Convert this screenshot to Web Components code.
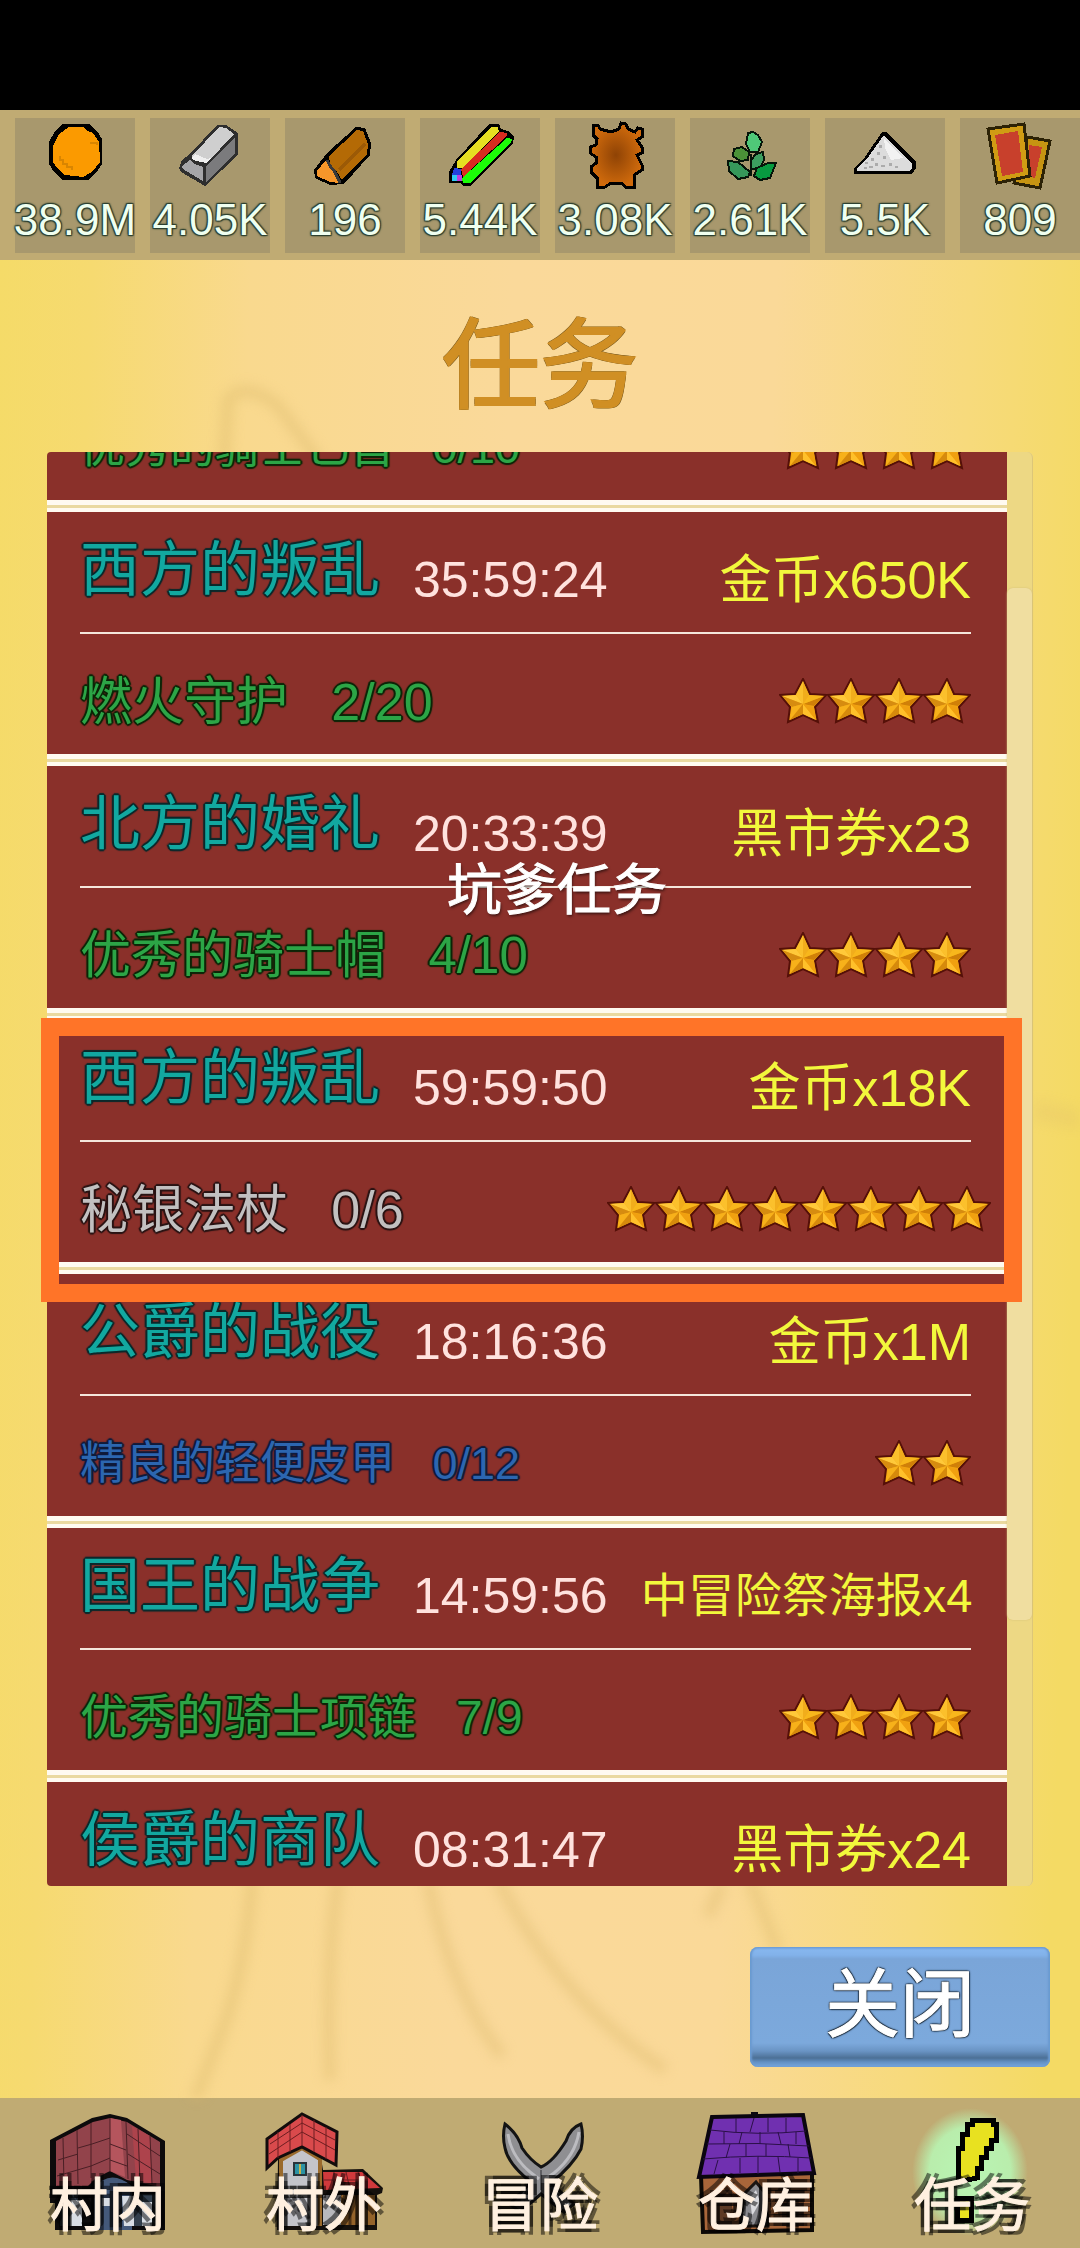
<!DOCTYPE html>
<html lang="zh-CN">
<head>
<meta charset="utf-8">
<meta name="viewport" content="width=device-width, initial-scale=1">
<title>任务</title>
<style>
  body {
    margin: 0;
    background: #000;
    font-family: "Liberation Sans", "Noto Sans CJK SC", sans-serif;
  }
</style>
</head>
<body>
<game-screen>
  <resource-bar slot="top">
    <resource-cell icon="gold">38.9M</resource-cell>
    <resource-cell icon="ingot">4.05K</resource-cell>
    <resource-cell icon="wood">196</resource-cell>
    <resource-cell icon="cloth">5.44K</resource-cell>
    <resource-cell icon="hide">3.08K</resource-cell>
    <resource-cell icon="herb">2.61K</resource-cell>
    <resource-cell icon="powder">5.5K</resource-cell>
    <resource-cell icon="cards">809</resource-cell>
  </resource-bar>

  <span slot="title">任务</span>

  <quest-panel scroll="198">
    <quest-card name="南方的战争" time="11:59:59" reward="金币x500K" item="优秀的骑士匕首" progress="0/10" rarity="green" fit="small" stars="4"></quest-card>
    <quest-card name="西方的叛乱" time="35:59:24" reward="金币x650K" item="燃火守护" progress="2/20" rarity="green" stars="4"></quest-card>
    <quest-card name="北方的婚礼" time="20:33:39" reward="黑市券x23" item="优秀的骑士帽" progress="4/10" rarity="green" fit="large" stars="4"></quest-card>
    <quest-card name="西方的叛乱" time="59:59:50" reward="金币x18K" item="秘银法杖" progress="0/6" rarity="grey" stars="8"></quest-card>
    <quest-card name="公爵的战役" time="18:16:36" reward="金币x1M" item="精良的轻便皮甲" progress="0/12" rarity="blue" fit="small" stars="2"></quest-card>
    <quest-card name="国王的战争" time="14:59:56" reward="中冒险祭海报x4" item="优秀的骑士项链" progress="7/9" rarity="green" fit="medium" stars="4"></quest-card>
    <quest-card name="侯爵的商队" time="08:31:47" reward="黑市券x24" item="" progress="" rarity="green" stars="0"></quest-card>
    <span slot="note">坑爹任务</span>
  </quest-panel>

  <game-button slot="actions">关闭</game-button>

  <nav-bar slot="nav">
    <nav-item icon="village">村内</nav-item>
    <nav-item icon="outside">村外</nav-item>
    <nav-item icon="swords">冒险</nav-item>
    <nav-item icon="store">仓库</nav-item>
    <nav-item icon="quest">任务</nav-item>
  </nav-bar>
</game-screen>

<script>
const resourceIcons = {
  gold: `
    <polygon points="48,6 74,6 82,13 87,21 87,46 81,55 73,62 48,62 39,54 34,46 34,24 40,13" fill="#000"/>
    <polygon points="54,9 69,9 71,12 78,15 84,24 85,44 77,54 68,59 50,57 43,51 38,44 38,28 44,16" fill="#fb9a00"/>
    <path d="M45 38v4h3v4h4v3h5v3M75 25h7v2" fill="none" stroke="#d98500" stroke-width="2"/>`,
  ingot: `
    <polygon points="29,50 32,42 39,37 67,7 76,7 88,15 88,37 55,68 31,54" fill="#2e2e2e"/>
    <polygon points="42,38 69,9 76,10 84,16 57,45 46,43" fill="#cfcfcf"/>
    <polygon points="41,40 45,36 57,41 61,40 57,45 46,43" fill="#efefef"/>
    <polygon points="32,48 40,42 45,46 53,49 53,63 33,51" fill="#a5a5a8"/>
    <polygon points="56,49 85,19 85,36 56,64" fill="#7b7b7d"/>`,
  wood: `
    <polygon points="71,9 80,10 86,25 85,37 59,66 45,67 30,60 29,52 42,35" fill="#000"/>
    <polygon points="72,12 78,13 83,26 82,36 57,62 52,54 45,46 44,38" fill="#b46a05"/>
    <path d="M54 52 80 26" stroke="#9c5a06" stroke-width="3"/>
    <polygon points="40,43 44,47 49,55 54,65 45,64 32,58 32,53" fill="#f6962a"/>
    <path d="M42 42 45 48 50 54 55 65" fill="none" stroke="#3a3a3a" stroke-width="3"/>`,
  cloth: `
    <polygon points="69,6 79,6 81,11 88,13 94,19 93,26 50,68 43,68 41,65 29,65 29,54 36,42" fill="#000"/>
    <polygon points="71,9 78,9 79,14 42,50 37,50 37,44" fill="#e6de22"/>
    <polygon points="80,14 87,15 87,18 43,59 41,51" fill="#d92b20"/>
    <polygon points="87,20 92,21 91,25 50,65 43,65 42,60" fill="#1cfc08"/>
    <polygon points="34,50 41,51 41,57 32,57" fill="#2440dc"/>
    <rect x="32" y="57" width="6" height="6" fill="#30c8f4"/>
    <rect x="37" y="57" width="5" height="6" fill="#c03ce0"/>`,
  hide: `
    <defs><radialGradient id="leather"><stop offset="0" stop-color="#8f4305"/><stop offset="1" stop-color="#cf6a0c"/></radialGradient></defs>
    <polygon points="38,7 43,7 45,11 56,14 64,11 66,5 71,6 73,11 80,14 83,10 87,11 87,19 82,22 87,29 87,35 82,37 87,47 87,52 79,57 79,69 71,69 66,65 56,65 50,69 42,69 42,60 36,54 36,49 41,45 41,39 35,35 35,29 41,27 42,21 38,17" fill="url(#leather)" stroke="#000" stroke-width="3"/>`,
  herb: `
    <g stroke="#06150a" stroke-width="2">
      <polygon points="58,15 63,14 68,17 72,24 68,34 60,34 56,26" fill="#4fc878"/>
      <polygon points="44,31 52,29 59,34 58,42 50,43 43,38" fill="#4b9238"/>
      <polygon points="61,42 66,36 73,34 74,42 70,50 61,51" fill="#3c9f60"/>
      <polygon points="38,43 48,44 60,54 58,59 48,61 39,53" fill="#36985a"/>
      <polygon points="67,50 78,45 86,45 80,60 70,62 64,58" fill="#079b40"/>
    </g>
    <path d="M61 36v22" stroke="#06150a" stroke-width="2"/>`,
  powder: `
    <polygon points="57,14 61,14 72,25 91,44 91,50 87,56 29,56 29,50 40,39" fill="#000"/>
    <polygon points="59,17 66,25 87,45 87,50 84,53 32,53 32,50 44,38" fill="#dcdcdc"/>
    <polygon points="59,20 78,40 66,42 60,30" fill="#f2f2f2"/>
    <g fill="#ababab"><path d="M40 44h3v2h-3zM46 40h3v3h-3zM44 48h4v2h-4zM52 34h3v3h-3zM50 45h3v3h-3zM58 38h3v3h-3zM56 47h4v2h-4zM64 45h3v3h-3zM39 49h3v2h-3zM54 27h3v3h-3zM70 48h3v2h-3z"/></g>`,
  cards: `
    <polygon points="67,19 90,23 80,70 54,65" fill="#c69412" stroke="#2c2206" stroke-width="3"/>
    <polygon points="69,27 82,29 75,60 66,58" fill="#c8402c"/>
    <polygon points="28,11 64,6 70,58 37,65" fill="#d09c14" stroke="#2c2206" stroke-width="3"/>
    <polygon points="35,17 58,13 63,54 42,58" fill="#c8402c"/>`,
};

const navIcons = {
  village: `
    <polygon points="50,42 92,20 110,16 127,20 165,43 165,132 55,132 55,105 50,105" fill="#0d0b0c"/>
    <polygon points="56,43 93,24 110,20 127,24 160,44 160,89 127,82 110,73 96,80 88,88 56,88" fill="#92434b"/>
    <polygon points="110,20 121,22 125,79 110,73" fill="#b5555d"/>
    <polygon points="132,28 150,38 152,86 136,82" fill="#ad434c"/>
    <path d="M63 40 64 86M77 32 78 86M91 25 91 80M110 20V74M126 24 128 81M138 31 140 84M150 38 152 86M58 62 78 56M78 50 92 46 110 40M57 78 91 68 110 60M110 46 126 52M127 36 160 58M110 62 127 68M128 56 160 76" fill="none" stroke="#4a1f25" stroke-width="1"/>
    <path d="M94 132V90Q110 70 132 88V132Z" fill="#44597a"/>
    <path d="M60 96h18v32H60zM134 96h22v32h-22z" fill="#34404e"/>
    <path d="M70 102h12v26H70zM102 100h8v8h-8zM122 98h12v30h-10zM142 104h10v24h-10z" fill="#d8dde4"/>`,
  outside: `
    <polygon points="62,60 105,60 107,72 147,71 167,90 166,95 161,97 161,132 61,132" fill="#15100c"/>
    <polygon points="66,62 86,52 103,62 103,128 66,128" fill="#c4c4ca"/>
    <path d="M65 128V62L86 50 104 61V128" fill="none" stroke="#9a6a2c" stroke-width="4"/>
    <rect x="78" y="65" width="12" height="12" fill="#2c93a4" stroke="#29343a" stroke-width="2"/>
    <path d="M84 66v10" stroke="#c5b34a" stroke-width="2"/>
    <path d="M72 104 84 98 82 112 92 120" fill="none" stroke="#88888e" stroke-width="2"/>
    <rect x="107" y="97" width="18" height="30" fill="#b8b8bc"/>
    <path d="M125 97h34v30h-34z" fill="#94632a"/>
    <path d="M134 97v30M146 97v30" stroke="#4d3216" stroke-width="3"/>
    <polygon points="51,41 86,16 121,34 120,67 86,49 62,60 51,70" fill="#d94a4c" stroke="#120c0c" stroke-width="3"/>
    <path d="M53 56 86 34 119 52M86 17V48M62 34v26M74 26v28M98 22v32M110 29v32M54 46 86 25 119 42" fill="none" stroke="#6c1d20" stroke-width="1"/>
    <polygon points="107,74 146,74 164,90 108,92" fill="#d0393c"/>
    <path d="M108 82h44M118 74v18M130 74l4 17M142 74l6 16" stroke="#6c1d20" stroke-width="1"/>`,
  swords: `
    <path d="M73 26Q86 36 90 50 98 62 109 69 121 64 134 43 138 30 149 26 152 38 149 51 141 67 119 85L142 106 132 114 109 96 88 114 78 106 99 84Q76 66 73 50 70 38 73 26Z" fill="#8f8f92" stroke="#141414" stroke-width="3"/>
    <path d="M76 36Q79 58 98 74L107 81M113 81 122 75Q143 58 147 34" fill="none" stroke="#bcbcc0" stroke-width="3"/>
    <path d="M109 72V92" stroke="#5d5d61" stroke-width="2"/>`,
  store: `
    <polygon points="53,78 164,74 164,132 55,134" fill="#a8663a" stroke="#0c0906" stroke-width="4"/>
    <path d="M62 92h22v36H62zM134 92h22v36h-22z" fill="#5d3a24"/>
    <path d="M92 128 96 96 108 84 118 96 120 128Z" fill="#8b8b90" stroke="#1b1512" stroke-width="3"/>
    <path d="M102 100 108 92 112 104 104 118Z" fill="#dadade"/>
    <polygon points="64,19 155,17 166,75 51,79" fill="#7030b0" stroke="#0b0610" stroke-width="4"/>
    <path d="M62 32Q110 38 158 33M59 46Q110 44 161 48M55 61Q110 56 163 60M88 20v14M106 20l-4 14M120 20v14M138 20v14M76 34v12M94 34l-3 12M112 34v12M130 34l3 12M148 34v12M82 46l-4 14M98 46v12M118 46v12M140 46l2 13M70 62l-4 14M92 60v15M110 58v18M130 59l2 15M150 60v15" fill="none" stroke="#2b1048" stroke-width="1"/>
    <path d="M103 14h7v6h-7z" fill="#0b0610"/>`,
  quest: `
    <defs><radialGradient id="glow"><stop offset="0" stop-color="#b9f5b4"/><stop offset=".7" stop-color="#b9edac"/><stop offset="1" stop-color="#b9edac" stop-opacity="0"/></radialGradient></defs>
    <ellipse cx="106" cy="74" rx="58" ry="64" fill="url(#glow)"/>
    <g shape-rendering="crispEdges" fill="#e8e120" stroke="#000" stroke-width="5">
      <polygon points="108,22 129,22 129,26 132,26 132,42 127,42 127,50 122,50 122,59 117,59 117,70 113,70 113,80 94,84 94,50 98,50 98,36 103,36 103,26 108,26"/>
      <rect x="93" y="100" width="14" height="22"/>
    </g>`,
};

const star = `<svg viewBox="0 1 48 48" aria-hidden="true">
  <polygon points="24,2 31,17 47,18 36,30 39,45 24,38 9,45 11,30 1,18 16,17" fill="#f3a712" stroke="#551008" stroke-width="2"/>
  <polygon points="24,4 24,27 17,18" fill="#fbc02c"/>
  <polygon points="24,4 24,27 30,18" fill="#f1ad1c"/>
  <polygon points="3,19 17,18 24,27" fill="#ffc93a"/>
  <polygon points="3,19 24,27 13,30" fill="#d68c10"/>
  <polygon points="45,19 24,27 35,29" fill="#d08008"/>
  <polygon points="45,19 30,18 24,27" fill="#f8b71c"/>
  <polygon points="11,43 24,27 13,30" fill="#f7b11a"/>
  <polygon points="11,43 24,27 24,37" fill="#d68a0c"/>
  <polygon points="37,43 24,27 24,37" fill="#ffc02a"/>
  <polygon points="37,43 24,27 35,30" fill="#f0a010"/>
</svg>`;

const attach = (host, html) => {
  const template = document.createElement('template');
  template.innerHTML = html;
  const shadow = host.attachShadow({ mode: 'open' });
  shadow.appendChild(template.content.cloneNode(true));
  return shadow;
};

class GameScreen extends HTMLElement {
  constructor() {
    super();
    attach(this, `<style>
      :host {
        display: flex;
        flex-direction: column;
        height: 100vh;
      }

      .status {
        height: 110px;
        flex: none;
        background: #000;
      }

      .page {
        flex: 1;
        min-height: 0;
        display: flex;
        flex-direction: column;
        position: relative;
        z-index: 0;
        background: linear-gradient(92deg, #f5db68 0%, #f6da70 8%, #f9d98e 22%, #fad99a 45%, #fad998 68%, #f7da7c 85%, #f4da64 97%);
      }

      .sketch {
        position: absolute;
        inset: 0;
        width: 100%;
        height: 100%;
        z-index: -1;
        filter: blur(6px);
      }

      h1 {
        margin: 0;
        height: 192px;
        flex: none;
        display: flex;
        align-items: center;
        justify-content: center;
        padding-top: 20px;
        box-sizing: border-box;
        color: #d08f24;
        font-size: 98px;
        font-weight: normal;
        line-height: 1;
        -webkit-text-stroke: 2px #d08f24;
        text-shadow: 1px 1px 0 #6b501c, -1px -1px 0 #6b501c, 1px -1px 0 #6b501c, -1px 1px 0 #6b501c;
      }

      main {
        flex: 1;
        min-height: 0;
        display: flex;
        padding: 0 47px;
      }

      footer {
        height: 212px;
        flex: none;
        display: flex;
        justify-content: flex-end;
        align-items: flex-start;
        padding: 61px 30px 0;
        box-sizing: border-box;
      }
    </style>
    <div class="status"></div>
    <slot name="top"></slot>
    <div class="page">
      <svg class="sketch" viewBox="0 0 1080 1838" preserveAspectRatio="none" aria-hidden="true">
        <g fill="none" stroke="#dcb86c" stroke-width="12" opacity=".4">
          <path d="M224 200 228 140Q245 120 278 146L318 200"/>
          <path d="M252 1620Q246 1700 226 1760L195 1840"/>
          <path d="M338 1620Q326 1700 330 1820"/>
          <path d="M428 1620Q450 1730 502 1796"/>
          <path d="M498 1620Q560 1740 665 1810"/>
          <path d="M750 1620 778 1690M722 1624 708 1656"/>
          <path d="M1034 850 1080 860" stroke-width="20" opacity=".5"/>
        </g>
      </svg>
      <h1><slot name="title"></slot></h1>
      <main><slot></slot></main>
      <footer><slot name="actions"></slot></footer>
    </div>
    <slot name="nav"></slot>`);
  }
}

class ResourceBar extends HTMLElement {
  constructor() {
    super();
    attach(this, `<style>
      :host {
        flex: none;
        height: 150px;
        box-sizing: border-box;
        display: grid;
        grid-template-columns: repeat(8, 1fr);
        gap: 15px;
        padding: 8px 0 7px 15px;
        background: #c0ab73;
      }
    </style><slot></slot>`);
  }
}

class ResourceCell extends HTMLElement {
  constructor() {
    super();
    attach(this, `<style>
      :host {
        display: flex;
        flex-direction: column;
        align-items: center;
        min-width: 0;
        background: #a8986d;
        color: #effff0;
        font-size: 44px;
        line-height: 60px;
        white-space: nowrap;
        text-shadow: 1px 1px 1px #2c4030, -1px -1px 1px #2c4030, 1px -1px 1px #2c4030, -1px 1px 1px #2c4030, 0 0 3px #2c4030;
      }

      svg {
        width: 120px;
        height: 72px;
        flex: none;
      }
    </style>
    <svg viewBox="0 0 120 72" shape-rendering="crispEdges" aria-hidden="true">${resourceIcons[this.getAttribute('icon')]}</svg>
    <span><slot></slot></span>`);
  }
}

class QuestPanel extends HTMLElement {
  constructor() {
    super();
    this.shadow = attach(this, `<style>
      :host {
        flex: 1;
        min-width: 0;
        display: flex;
        position: relative;
        border-radius: 6px;
        background: #ead9a0;
      }

      .list {
        flex: 1;
        min-width: 0;
        display: flex;
        flex-direction: column;
        gap: 3px;
        overflow-y: auto;
        scrollbar-width: none;
        border-radius: 4px 0 0 4px;
      }

      .track {
        width: 26px;
        box-sizing: border-box;
        border-right: 1px solid #dcc678;
        border-radius: 0 6px 6px 0;
        background: #edd884;
      }

      .thumb {
        height: 72%;
        margin-top: 136px;
        border-radius: 6px;
        background: #f0dea0;
        box-shadow: 0 0 2px #d2bd78;
      }

      .frame {
        position: absolute;
        top: 566px;
        left: -6px;
        right: 11px;
        height: 284px;
        box-sizing: border-box;
        border: 18px solid #ff7428;
        pointer-events: none;
      }

      .note {
        position: absolute;
        top: 408px;
        left: 400px;
        color: #fff;
        font-size: 55px;
        line-height: 60px;
        -webkit-text-stroke: 1px #fff;
        text-shadow: 1px 2px 3px rgba(0, 0, 0, 0.6);
      }
    </style>
    <div class="list"><slot></slot></div>
    <div class="track"><div class="thumb"></div></div>
    <div class="frame"></div>
    <div class="note"><slot name="note"></slot></div>`);
  }

  connectedCallback() {
    this.shadow.querySelector('.list').scrollTop = Number(this.getAttribute('scroll'));
  }
}

class QuestCard extends HTMLElement {
  constructor() {
    super();

    const shadow = attach(this, `<style>
      :host {
        display: block;
        flex: none;
        padding: 0 36px 0 33px;
        border-top: 4px solid #fffaf0;
        border-bottom: 5px solid #fffaf0;
        background: #8a302a;
        white-space: nowrap;
        line-height: 60px;
      }

      .head,
      .body {
        display: flex;
        align-items: center;
        height: 120px;
        box-sizing: border-box;
      }

      .head {
        gap: 33px;
        border-bottom: 2px solid #f4e6dc;
        height: 122px;
      }

      .body {
        padding-top: 16px;
        justify-content: space-between;
      }

      .name,
      .item {
        text-shadow: 1px 1px 1px var(--edge), -1px -1px 1px var(--edge), 1px -1px 1px var(--edge), -1px 1px 1px var(--edge), 0 2px 1px var(--edge), 2px 0 1px var(--edge), -2px 0 1px var(--edge), 0 -2px 1px var(--edge);
      }

      .name {
        --edge: #0a2a2c;
        margin: 0;
        padding-bottom: 2px;
        color: #12a8a0;
        font-size: 60px;
        font-weight: normal;
      }

      .time,
      .reward {
        padding-top: 16px;
      }

      .time {
        color: #ffe2de;
        font-size: 50px;
      }

      .reward {
        margin-left: auto;
        color: #f2f83c;
        font-size: 52px;
      }

      .reward.long {
        font-size: 47px;
      }

      .item {
        --edge: #0c2608;
        color: #2ca546;
        font-size: 52px;
        white-space: pre;
      }

      .item.blue {
        --edge: #101c3c;
        color: #2c66b0;
      }

      .item.grey {
        --edge: #2a1414;
        color: #c2c0c0;
      }

      .item.large {
        font-size: 51px;
      }

      .item.medium {
        font-size: 48px;
      }

      .item.small {
        font-size: 45px;
      }

      .stars {
        display: flex;
        justify-content: safe flex-end;
        width: 364px;
      }

      svg {
        flex: none;
        width: 48px;
        height: 48px;
      }
    </style>
    <div class="head">
      <h2 class="name"></h2>
      <time class="time"></time>
      <span class="reward"></span>
    </div>
    <div class="body">
      <span class="item"></span>
      <div class="stars"></div>
    </div>`);

    const reward = this.getAttribute('reward');
    const fit = this.getAttribute('fit');
    const item = shadow.querySelector('.item');
    const rewardElement = shadow.querySelector('.reward');

    shadow.querySelector('.name').textContent = this.getAttribute('name');
    shadow.querySelector('.time').textContent = this.getAttribute('time');
    rewardElement.textContent = reward;
    if (reward.length > 7) rewardElement.classList.add('long');

    item.textContent = `${this.getAttribute('item')}   ${this.getAttribute('progress')}`;
    item.classList.add(this.getAttribute('rarity'));
    if (fit) item.classList.add(fit);

    shadow.querySelector('.stars').innerHTML = star.repeat(Number(this.getAttribute('stars')));
  }
}

class GameButton extends HTMLElement {
  constructor() {
    super();
    attach(this, `<style>
      :host {
        display: block;
      }

      button {
        width: 300px;
        height: 120px;
        padding: 0 0 4px;
        border: 0;
        border-radius: 8px;
        background: linear-gradient(#6f9fdc 0, #86b6ee 3px, #82b2ea 8px, #7aa5d8 12px, #7ca9dc 96px, #6a94c4 104px, #4c7096 111px, #6290c4 115px, #78a8dc 120px);
        box-shadow: inset 2px 0 2px #6a9ad0, inset -2px 0 2px #6a9ad0;
        color: #fff;
        font-family: inherit;
        font-size: 75px;
        line-height: 1;
        -webkit-text-stroke: 1px #fff;
        text-shadow: 1px 1px 1px #203040, -1px -1px 1px #203040, 1px -1px 1px #203040, -1px 1px 1px #203040, 0 0 3px #203040;
      }
    </style>
    <button type="button"><slot></slot></button>`);
  }
}

class NavBar extends HTMLElement {
  constructor() {
    super();
    attach(this, `<style>
      :host {
        flex: none;
        height: 150px;
        background: #c0ab73;
      }

      nav {
        display: grid;
        grid-template-columns: repeat(5, 1fr);
        height: 100%;
      }
    </style>
    <nav><slot></slot></nav>`);
  }
}

class NavItem extends HTMLElement {
  constructor() {
    super();
    attach(this, `<style>
      :host {
        display: block;
      }

      a {
        display: flex;
        justify-content: center;
        position: relative;
        height: 100%;
        color: #fff0e0;
        text-decoration: none;
      }

      svg {
        width: 216px;
        height: 150px;
      }

      span {
        position: absolute;
        left: 0;
        right: 0;
        bottom: 12px;
        text-align: center;
        font-size: 58px;
        line-height: 60px;
        -webkit-text-stroke: 1px #fff0e0;
        text-shadow: 4px 4px 0 rgba(0, 0, 0, 0.5), -4px 4px 0 rgba(0, 0, 0, 0.5), 4px -4px 0 rgba(0, 0, 0, 0.5), -4px -4px 0 rgba(0, 0, 0, 0.5);
      }
    </style>
    <a href="#${this.getAttribute('icon')}">
      <svg viewBox="0 0 216 150" aria-hidden="true">${navIcons[this.getAttribute('icon')]}</svg>
      <span><slot></slot></span>
    </a>`);
  }
}

(() => {

  window.customElements.define('resource-cell', ResourceCell);
  window.customElements.define('resource-bar', ResourceBar);
  window.customElements.define('quest-card', QuestCard);
  window.customElements.define('game-button', GameButton);
  window.customElements.define('nav-item', NavItem);
  window.customElements.define('nav-bar', NavBar);
  window.customElements.define('game-screen', GameScreen);
  window.customElements.define('quest-panel', QuestPanel);

})();
</script>
</body>
</html>
